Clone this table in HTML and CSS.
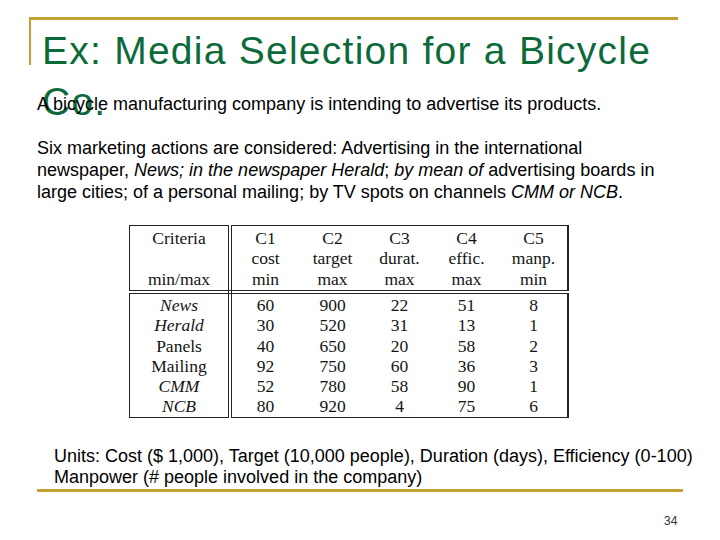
FILE: index.html
```html
<!DOCTYPE html>
<html>
<head>
<meta charset="utf-8">
<link rel="stylesheet" href="styles.css">
</head>
<body>
<div class="slide">
  <div class="title-frame">
    <h1 class="title">Ex: Media Selection for a Bicycle Co.</h1>
  </div>
  <div class="content">
    <p class="intro">A bicycle manufacturing company is intending to advertise its products.</p>
    <p class="actions">Six marketing actions are considered: Advertising in the international newspaper, <i>News; in the newspaper Herald</i>; <i>by mean of</i> advertising boards in large cities; of a personal mailing; by TV spots on channels <i>CMM or NCB</i>.</p>
    <table class="criteria">
      <thead>
        <tr>
          <th class="first">Criteria<br><br>min/max</th>
          <th>C1<br>cost<br>min</th>
          <th>C2<br>target<br>max</th>
          <th>C3<br>durat.<br>max</th>
          <th>C4<br>effic.<br>max</th>
          <th>C5<br>manp.<br>min</th>
        </tr>
      </thead>
      <tbody>
        <tr><td class="first"><i>News</i><br><i>Herald</i><br>Panels<br>Mailing<br><i>CMM</i><br><i>NCB</i></td>
          <td>60<br>30<br>40<br>92<br>52<br>80</td>
          <td>900<br>520<br>650<br>750<br>780<br>920</td>
          <td>22<br>31<br>20<br>60<br>58<br>4</td>
          <td>51<br>13<br>58<br>36<br>90<br>75</td>
          <td>8<br>1<br>2<br>3<br>1<br>6</td></tr>
      </tbody>
    </table>
    <p class="units">Units: Cost ($ 1,000), Target (10,000 people), Duration (days), Efficiency (0-100)<br>Manpower (# people involved in the company)</p>
  </div>
  <div class="footer-rule"></div>
  <div class="page-num">34</div>
</div>
</body>
</html>
```

FILE: styles.css
```css
html, body {
  margin: 0;
  padding: 0;
  background: #ffffff;
}

.slide {
  width: 720px;
  height: 540px;
  overflow: hidden;
  background: #ffffff;
  font-family: "Liberation Sans", Arial, sans-serif;
  color: #000000;
  padding-top: 17px;
  box-sizing: border-box;
}

.title-frame {
  margin-left: 29px;
  width: 649px;
  height: 48px;
  border-top: 3px solid #c4a032;
  border-left: 2px solid #c4a032;
  box-sizing: border-box;
}

.title {
  margin: 0;
  padding: 5px 0 0 11px;
  font-family: "Liberation Sans", Arial, sans-serif;
  font-weight: normal;
  font-size: 39px;
  letter-spacing: 1.25px;
  line-height: 51px;
  color: #0d6a3b;
  width: 630px;
}

.content {
  padding-left: 37px;
}

.intro {
  margin: 0;
  padding-top: 28px;
  font-size: 18px;
  line-height: 22px;
}

.actions {
  margin: 0;
  padding-top: 22px;
  font-size: 18px;
  line-height: 22px;
  width: 630px;
}

.criteria {
  margin: 22px 0 0 92px;
  border-collapse: collapse;
  border: 1px solid #222;
  border-right: 2px solid #222;
  font-family: "Liberation Serif", "Times New Roman", serif;
  font-size: 17.5px;
  line-height: 20.3px;
  color: #141414;
}

.criteria th,
.criteria td {
  padding: 0;
  text-align: center;
  font-weight: normal;
  vertical-align: top;
  width: 67px;
}

.criteria th {
  height: 62px;
  padding-top: 2px;
  border-bottom: 4px double #222;
}

.criteria td {
  padding-top: 1px;
  height: 121px;
}

.criteria .first {
  width: 98px;
  border-right: 4px double #222;
}

.units {
  margin: 28px 0 0 17px;
  font-size: 18px;
  line-height: 21px;
}

.footer-rule {
  margin: 1px 0 0 37px;
  width: 646px;
  height: 3px;
  background: #c4a032;
}

.page-num {
  margin: 22px 0 0 664px;
  font-size: 12px;
  line-height: 14px;
  color: #333;
}
```
